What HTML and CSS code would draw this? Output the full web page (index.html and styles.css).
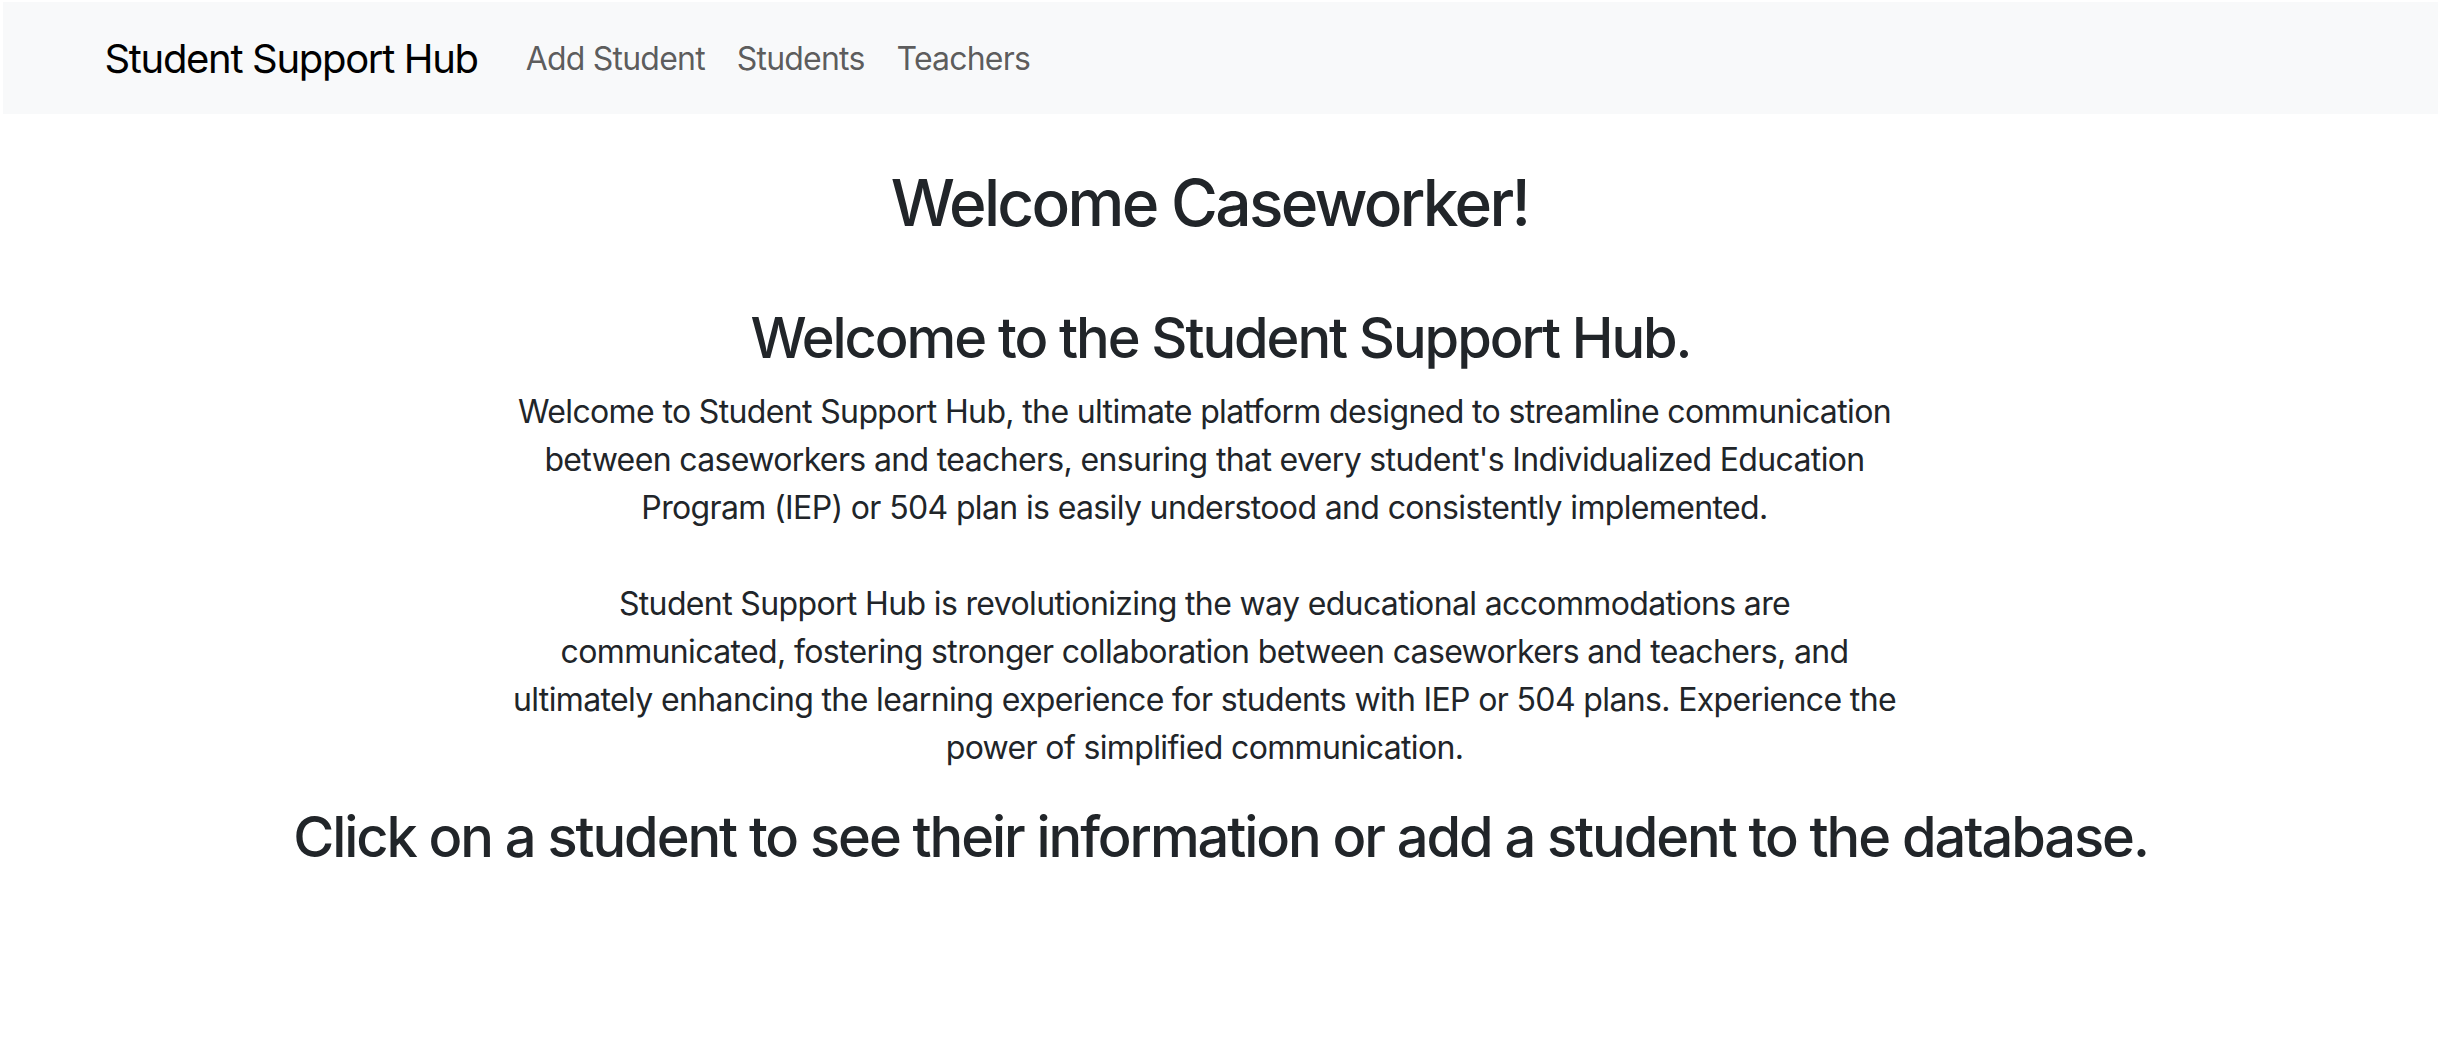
FILE: index.html
```html
<!DOCTYPE html>
<html lang="en">
<head>
<meta charset="utf-8">
<title>Student Support Hub</title>
<link rel="stylesheet" href="styles.css">
</head>
<body>
<nav class="navbar">
  <div class="nav-container">
    <a class="brand" href="#">Student Support Hub</a>
    <ul class="nav-links">
      <li><a class="nav-link" href="#">Add Student</a></li>
      <li><a class="nav-link" href="#">Students</a></li>
      <li><a class="nav-link" href="#">Teachers</a></li>
    </ul>
  </div>
</nav>
<main class="content">
  <h2 class="title">Welcome Caseworker!</h2>
  <h3 class="subtitle">Welcome to the Student Support Hub.</h3>
  <p class="intro">Welcome to Student Support Hub, the ultimate platform designed to streamline communication between caseworkers and teachers, ensuring that every student's Individualized Education Program (IEP) or 504 plan is easily understood and consistently implemented.<br><br>Student Support Hub is revolutionizing the way educational accommodations are communicated, fostering stronger collaboration between caseworkers and teachers, and ultimately enhancing the learning experience for students with IEP or 504 plans. Experience the power of simplified communication.</p>
  <h3 class="cta">Click on a student to see their information or add a student to the database.</h3>
</main>
</body>
</html>
```
FILE: styles.css
```css
html, body {
  margin: 0;
  padding: 0;
  background: #fff;
}
body {
  font-family: Inter, "Liberation Sans", Arial, sans-serif;
  color: #212529;
  font-size: 32px;
  line-height: 1.5;
  letter-spacing: -0.02em;
  padding: 2px 0 0 3px;
}
.navbar {
  background: #f8f9fa;
  padding: 17px 0 15px;
}
.nav-container {
  width: 2232px;
  margin: 0 auto;
  padding: 0 24px;
  display: flex;
  align-items: center;
}
.brand {
  font-size: 40px;
  line-height: 60px;
  padding: 10px 0;
  margin-right: 32px;
  letter-spacing: -0.033em;
  color: #000;
  text-decoration: none;
}
.nav-links {
  list-style: none;
  margin: 0;
  padding: 0;
  display: flex;
}
.nav-link {
  display: block;
  padding: 16px;
  font-size: 32px;
  line-height: 48px;
  letter-spacing: -0.025em;
  color: rgba(0, 0, 0, 0.65);
  text-decoration: none;
}
.content {
  text-align: center;
  padding-top: 51px;
}
.title {
  margin: 0 0 63px;
  padding-right: 22px;
  font-size: 64px;
  line-height: 1.2;
  font-weight: 500;
  letter-spacing: -0.042em;
}
.subtitle, .cta {
  margin: 0 0 16px;
  font-size: 56px;
  line-height: 1.2;
  font-weight: 500;
  letter-spacing: -0.037em;
}
.intro {
  width: 1384px;
  margin: 0 0 32px calc(50% - 708px);
}
```
